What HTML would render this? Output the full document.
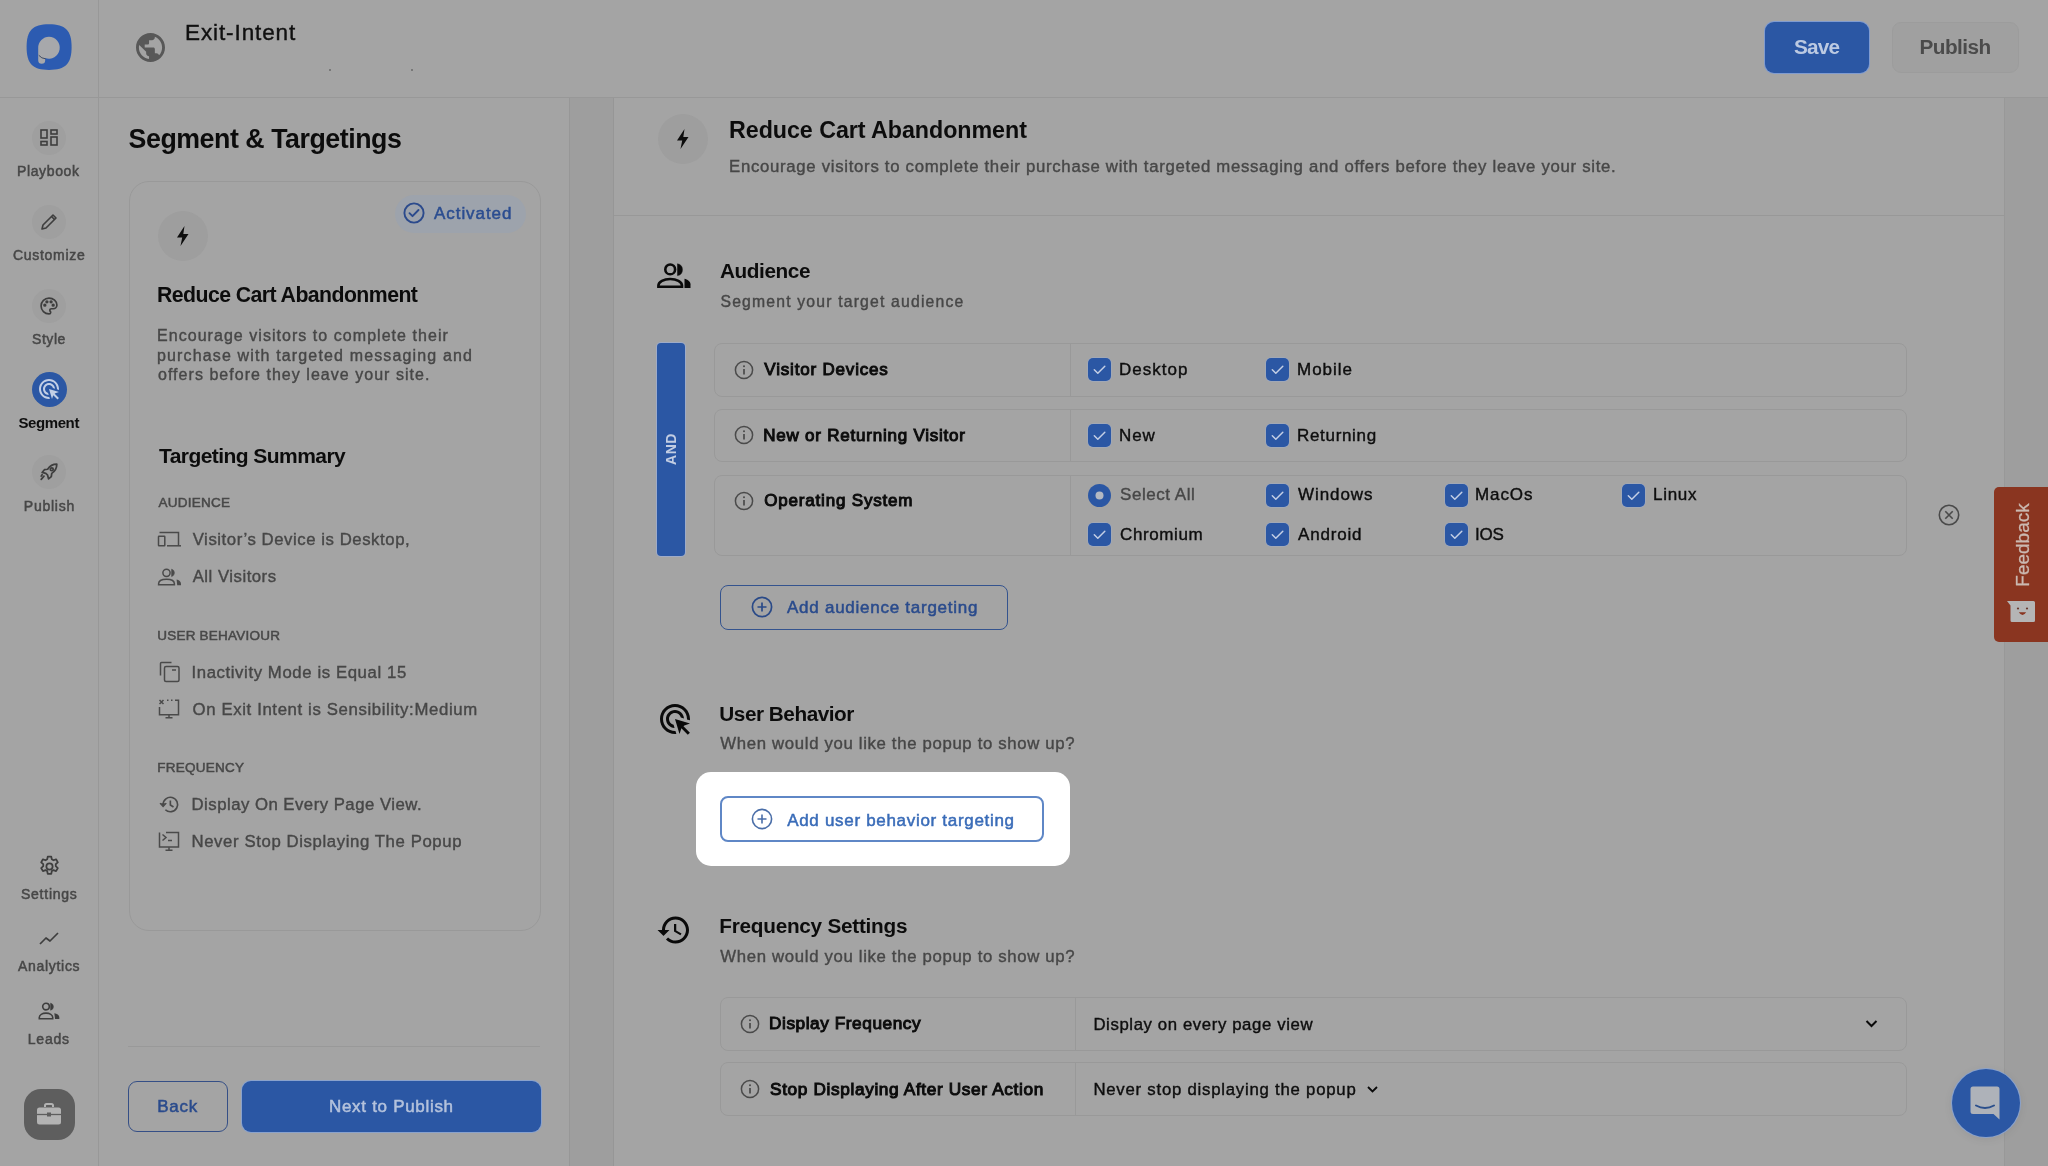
<!DOCTYPE html>
<html><head><meta charset="utf-8"><style>
html,body{margin:0;padding:0;width:2048px;height:1166px;overflow:hidden;background:#a4a4a4;}
body{position:relative;font-family:"Liberation Sans",sans-serif;}
#root{position:absolute;left:0;top:0;width:2048px;height:1166px;will-change:transform;}
.t{position:absolute;white-space:pre;line-height:1;}
.a{position:absolute;box-sizing:border-box;}
svg{position:absolute;overflow:visible;}
</style></head><body><div id="root">
<!-- structure -->
<div class="a" style="left:0;top:97px;width:2048px;height:1px;background:#989898"></div>
<div class="a" style="left:98px;top:0;width:1px;height:1166px;background:#989898"></div>
<div class="a" style="left:569px;top:98px;width:1px;height:1068px;background:#979797"></div>
<div class="a" style="left:570px;top:98px;width:43px;height:1068px;background:#9e9e9e"></div>
<div class="a" style="left:613px;top:98px;width:1px;height:1068px;background:#969696"></div>
<div class="a" style="left:2004px;top:98px;width:1px;height:1068px;background:#989898"></div>
<div class="a" style="left:2005px;top:98px;width:43px;height:1068px;background:#9e9e9e"></div>
<div class="a" style="left:614px;top:215px;width:1390px;height:1px;background:#989898"></div>

<!-- logo -->
<svg style="left:20px;top:20px" width="60" height="60" viewBox="20 20 60 60">
<path d="M49 24.2C65.5 24.2 71.6 30.5 71.6 47.1C71.6 63.7 65.5 70 49 70C32.5 70 26.6 63.7 26.6 47.1C26.6 30.5 32.5 24.2 49 24.2Z" fill="#2c5bb1"/>
<path d="M49 36.7A11 11 0 1 1 45.2 58.1L45.2 60.3Q45.2 63.8 41.7 63.8Q38.2 63.8 38.2 60.3L38.2 47.7A11 11 0 0 1 49 36.7Z" fill="#a7a8ab"/>
<path d="M38.8 55.3Q41.5 58.6 45.6 58.8" stroke="#33405a" stroke-width="0.9" fill="none"/>
</svg>
<div class="a" style="left:329px;top:69px;width:2px;height:2px;background:#6a6a6a;border-radius:1px"></div>
<div class="a" style="left:411px;top:69px;width:2px;height:2px;background:#6a6a6a;border-radius:1px"></div>
<!-- globe -->
<svg style="left:136px;top:33px" width="29" height="29" viewBox="2 2 20 20">
<path fill="#585858" d="M12 2C6.48 2 2 6.48 2 12s4.48 10 10 10 10-4.48 10-10S17.52 2 12 2zm-1 17.93c-3.95-.49-7-3.85-7-7.93 0-.62.08-1.21.21-1.79L9 15v1c0 1.1.9 2 2 2v1.93zm6.9-2.54c-.26-.81-1-1.39-1.9-1.39h-1v-3c0-.55-.45-1-1-1H8v-2h2c.55 0 1-.45 1-1V7h2c1.1 0 2-.9 2-2v-.41c2.93 1.19 5 4.06 5 7.41 0 2.08-.8 3.97-2.1 5.39z"/>
</svg>

<!-- header buttons -->
<div class="a" style="left:1765px;top:22px;width:104px;height:51px;background:#2b57a4;border-radius:9px;box-shadow:0 0 0 1px #7f9bd0"></div>
<div class="a" style="left:1892px;top:22px;width:127px;height:51px;background:#a0a0a0;border-radius:9px;border:1px solid #9c9c9c"></div>

<!-- sidebar icon circles -->
<div class="a" style="left:32px;top:121px;width:34px;height:34px;border-radius:50%;background:#9f9f9f"></div>
<div class="a" style="left:32px;top:205px;width:34px;height:34px;border-radius:50%;background:#9f9f9f"></div>
<div class="a" style="left:32px;top:289px;width:34px;height:34px;border-radius:50%;background:#9f9f9f"></div>
<div class="a" style="left:31.5px;top:372px;width:35px;height:35px;border-radius:50%;background:#2b57a4"></div>
<div class="a" style="left:32px;top:455px;width:34px;height:34px;border-radius:50%;background:#9f9f9f"></div>
<!-- playbook grid -->
<svg style="left:40px;top:129px" width="18" height="17" viewBox="0 0 18 17" fill="none" stroke="#3e3e3e" stroke-width="1.6">
<rect x="1" y="1" width="6" height="8"/><rect x="11" y="1" width="6" height="4"/><rect x="1" y="12.5" width="6" height="3.5"/><rect x="11" y="8" width="6" height="8"/>
</svg>
<!-- pencil -->
<svg style="left:39px;top:212px" width="20" height="20" viewBox="0 0 20 20" fill="none" stroke="#3e3e3e" stroke-width="1.6" stroke-linejoin="round">
<path d="M3 17l1-4L14 3l3 3L7 16z"/><path d="M12.5 4.5l3 3"/>
</svg>
<!-- palette -->
<svg style="left:39px;top:296px" width="20" height="20" viewBox="0 0 24 24" fill="none" stroke="#3e3e3e" stroke-width="2">
<path d="M12 2.5a9.5 9.5 0 0 0 0 19c1.2 0 2-.8 2-1.8 0-.5-.2-.9-.5-1.3-.3-.3-.5-.8-.5-1.3 0-1 .8-1.8 1.8-1.8H17a4.5 4.5 0 0 0 4.5-4.5C21.5 6.3 17.2 2.5 12 2.5z"/>
<circle cx="7" cy="11" r="1" fill="#3e3e3e"/><circle cx="9.5" cy="7" r="1" fill="#3e3e3e"/><circle cx="14.5" cy="7" r="1" fill="#3e3e3e"/><circle cx="17" cy="11" r="1" fill="#3e3e3e"/>
</svg>
<!-- segment ads_click white -->
<svg style="left:37px;top:377px" width="24" height="24" viewBox="0 0 24 24">
<path fill="#c3cfe6" d="M11.71 17.99C8.53 17.84 6 15.22 6 12c0-3.310 2.69-6 6-6 3.22 0 5.84 2.53 5.99 5.71l-2.1-.63C15.480 9.31 13.89 8 12 8c-2.21 0-4 1.79-4 4 0 1.89 1.31 3.48 3.08 3.89l.63 2.1zM22 12c0 .3-.01.6-.04.9l-1.97-.59c.01-.1.01-.21.01-.31 0-4.42-3.58-8-8-8s-8 3.58-8 8 3.58 8 8 8c.1 0 .21 0 .31-.01l.59 1.97c-.3.03-.6.04-.9.04-5.52 0-10-4.48-10-10S6.48 2 12 2s10 4.480 10 10zm-3.77 4.26L22 15l-10-3 3 10 1.26-3.77 4.27 4.27 1.41-1.41-4.270-4.27z"/>
</svg>
<!-- rocket -->
<svg style="left:38px;top:461px" width="22" height="22" viewBox="0 0 24 24" fill="none" stroke="#3e3e3e" stroke-width="1.9" stroke-linejoin="round" stroke-linecap="round">
<path d="M20.5 3.5c-4 0-7.5 1.8-10 5.5l-3.5.5-2.5 3 4 1 2 2 1 4 3-2.5.5-3.5c3.7-2.5 5.5-6 5.5-10z"/><circle cx="15" cy="9" r="1.6"/><path d="M6.5 16.5l-3 3.5M4.5 15l-1 1.5"/>
</svg>
<!-- gear -->
<svg style="left:36.5px;top:853.5px" width="25" height="25" viewBox="0 0 24 24" fill="none" stroke="#3e3e3e" stroke-width="1.7">
<path d="M10.3 2.5h3.4l.5 2.6 1.6.9 2.5-.9 1.7 2.9-2 1.8v1.9l2 1.8-1.7 2.9-2.5-.9-1.6.9-.5 2.6h-3.4l-.5-2.6-1.6-.9-2.5.9-1.7-2.9 2-1.8v-1.9l-2-1.8 1.7-2.9 2.5.9 1.6-.9z" stroke-linejoin="round"/><circle cx="12" cy="12" r="3"/>
</svg>
<!-- trend -->
<svg style="left:39px;top:931px" width="20" height="14" viewBox="0 0 20 14" fill="none" stroke="#3e3e3e" stroke-width="1.7" stroke-linejoin="round">
<path d="M1 13l6-6 4 3 8-8"/>
</svg>
<!-- leads users -->
<svg style="left:38px;top:1002px" width="22" height="18" viewBox="0 0 22 18" fill="none" stroke="#3e3e3e" stroke-width="1.6">
<circle cx="8" cy="4.6" r="3.3"/><path d="M12.6 1.2a3.6 3.6 0 0 1 0 7z" fill="#3e3e3e" stroke-width="0.6"/><path d="M1.3 16.7v-1.2c0-2.6 3-4.4 6.7-4.4s6.7 1.8 6.7 4.4v1.2z"/><path d="M16.3 11.2c2.6.4 5 1.6 5 4v1.8h-4.2z" fill="#3e3e3e" stroke="none"/>
</svg>
<!-- briefcase squircle -->
<div class="a" style="left:24px;top:1089px;width:51px;height:51px;border-radius:17px;background:#5e5e5e"></div>
<svg style="left:36px;top:1103px" width="26" height="23" viewBox="0 0 26 23">
<path d="M9 4V2.5Q9 1 10.5 1h5Q17 1 17 2.5V4" stroke="#b3b3b3" stroke-width="2" fill="none"/>
<rect x="1" y="4.5" width="24" height="17" rx="2.5" fill="#b3b3b3"/>
<path d="M1 11.5h24" stroke="#5e5e5e" stroke-width="1.3"/><rect x="11" y="9.5" width="4" height="4" fill="#5e5e5e"/>
</svg>

<!-- left card -->
<div class="a" style="left:128.5px;top:181px;width:412px;height:749.5px;border:1px solid #999;border-radius:20px"></div>
<div class="a" style="left:395px;top:195px;width:131px;height:38px;border-radius:19px;background:#9da3ac"></div>
<svg style="left:402.5px;top:202px" width="22" height="22" viewBox="0 0 22 22" fill="none" stroke="#2b4a8c" stroke-width="1.9">
<circle cx="11" cy="11" r="9.6"/><path d="M6.5 11.2l3 3 6-6.2" stroke-linecap="round" stroke-linejoin="round"/>
</svg>
<div class="a" style="left:158px;top:211px;width:50px;height:50px;border-radius:50%;background:#9e9e9e"></div>
<svg style="left:174px;top:225px" width="18" height="22" viewBox="0 0 18 22"><path d="M10.5 1L3 12.5h5.2L6.5 21 14.5 9H9.3z" fill="#0d0d0d"/></svg>

<!-- summary icons -->
<svg style="left:157px;top:531px" width="26" height="17" viewBox="0 0 26 17" fill="none" stroke="#4a4a4a" stroke-width="1.5">
<path d="M2.5 1.5h19v13.5"/><path d="M10 14.8h14"/><rect x="1.5" y="5.3" width="6.3" height="9.5" rx="0.5"/>
</svg>
<svg style="left:157px;top:568px" width="26" height="18" viewBox="0 0 26 18" fill="none" stroke="#4a4a4a" stroke-width="1.5">
<circle cx="9.5" cy="4.8" r="3.6"/><path d="M14.6 1.2a3.8 3.8 0 0 1 0 7.3z" fill="#4a4a4a" stroke-width="0.6"/><path d="M1.6 16.8v-1c0-3 3.5-4.6 7.9-4.6s7.9 1.6 7.9 4.6v1z"/><path d="M19.6 11.4c2.4.5 4.4 1.8 4.4 4.4v1.5h-3.8z" fill="#4a4a4a" stroke="none"/>
</svg>
<svg style="left:158px;top:660px" width="23" height="23" viewBox="0 0 23 23" fill="none" stroke="#4a4a4a" stroke-width="1.5">
<path d="M2.5 15.5V3.5q0-1 1-1h10"/><rect x="6.5" y="6.5" width="14.5" height="15" rx="1.5"/><path d="M14 10h4"/>
</svg>
<svg style="left:158px;top:698px" width="23" height="22" viewBox="0 0 23 22" fill="none" stroke="#4a4a4a" stroke-width="1.5">
<path d="M1.5 2l4 4M5.5 2l-4 4"/><path d="M9 2.3h1.5M13 2.3h1.5M17 2.3h3.5v14.5h-19V9"/><path d="M11 17v2.5M7.5 19.7h7"/>
</svg>
<svg style="left:158px;top:795px" width="22" height="19" viewBox="0 0 24 21" fill="none" stroke="#4a4a4a" stroke-width="1.8">
<path d="M5.5 10.5A8 8 0 1 1 8 16.3"/><path d="M2 9l3.5 3.8L9 9" fill="#4a4a4a" stroke-width="1.3"/><path d="M13.5 6v5l3.5 2.3"/>
</svg>
<svg style="left:158px;top:831px" width="23" height="21" viewBox="0 0 23 21" fill="none" stroke="#4a4a4a" stroke-width="1.5">
<path d="M8 1.5h12.5v14.5h-19V1.5"/><path d="M4.5 3.5l3.5 3-3.5 3M10 9.5h4"/><path d="M11 16.3v2.5M7.5 19.3h7"/>
</svg>

<div class="a" style="left:128px;top:1045.5px;width:412px;height:1px;background:#999"></div>
<div class="a" style="left:128px;top:1080.5px;width:99.5px;height:51.5px;border:1.6px solid #354f86;border-radius:9px"></div>
<div class="a" style="left:241.5px;top:1080.5px;width:299px;height:51.5px;background:#2b57a4;border-radius:9px;box-shadow:0 0 0 1px #8aa2cc"></div>
<!-- main top -->
<div class="a" style="left:658px;top:114px;width:50px;height:50px;border-radius:50%;background:#9e9e9e"></div>
<svg style="left:674px;top:128px" width="18" height="22" viewBox="0 0 18 22"><path d="M10.5 1L3 12.5h5.2L6.5 21 14.5 9H9.3z" fill="#0d0d0d"/></svg>

<!-- audience icon -->
<svg style="left:656px;top:262px" width="36" height="28" viewBox="0 0 36 28" fill="none" stroke="#0a0a0a" stroke-width="2.6">
<circle cx="14.2" cy="7.4" r="4.9"/>
<path d="M21.5 1.8a6 6 0 0 1 0 11.8z" fill="#0a0a0a" stroke-width="0.5"/>
<path d="M2.4 24.8v-1.2c0-4 5.5-6.6 11.8-6.6s11.8 2.6 11.8 6.6v1.2z"/>
<path d="M28.5 16.8c2.8.7 6 2.5 6 5.5v3.7h-6z" fill="#0a0a0a" stroke="none"/>
</svg>

<!-- AND bar -->
<div class="a" style="left:657px;top:343px;width:28px;height:213px;background:#2b57a4;border-radius:4px;box-shadow:0 0 0 1px #9eabc8"></div>
<div class="t" style="left:671px;top:449px;font-size:14px;font-weight:700;color:#c2cde3;transform:translate(-50%,-50%) rotate(-90deg);letter-spacing:0.6px">AND</div>

<!-- rows -->
<div class="a" style="left:714px;top:343px;width:1192.5px;height:53.5px;border:1px solid #999;border-radius:8px"></div>
<div class="a" style="left:714px;top:408.5px;width:1192.5px;height:53px;border:1px solid #999;border-radius:8px"></div>
<div class="a" style="left:714px;top:474.5px;width:1192.5px;height:81.5px;border:1px solid #999;border-radius:8px"></div>
<div class="a" style="left:1070px;top:344px;width:1px;height:52px;background:#999"></div>
<div class="a" style="left:1070px;top:409.5px;width:1px;height:51.5px;background:#999"></div>
<div class="a" style="left:1070px;top:475.5px;width:1px;height:80px;background:#999"></div>

<svg style="left:734px;top:359.5px" width="20" height="20" viewBox="0 0 20 20" fill="none" stroke="#4a4a4a" stroke-width="1.5"><circle cx="10" cy="10" r="8.6"/><path d="M10 9v5.5" stroke-width="1.7"/><circle cx="10" cy="6.3" r="1" fill="#4a4a4a" stroke="none"/></svg>
<svg style="left:734px;top:425px" width="20" height="20" viewBox="0 0 20 20" fill="none" stroke="#4a4a4a" stroke-width="1.5"><circle cx="10" cy="10" r="8.6"/><path d="M10 9v5.5" stroke-width="1.7"/><circle cx="10" cy="6.3" r="1" fill="#4a4a4a" stroke="none"/></svg>
<svg style="left:734px;top:490.5px" width="20" height="20" viewBox="0 0 20 20" fill="none" stroke="#4a4a4a" stroke-width="1.5"><circle cx="10" cy="10" r="8.6"/><path d="M10 9v5.5" stroke-width="1.7"/><circle cx="10" cy="6.3" r="1" fill="#4a4a4a" stroke="none"/></svg>

<!-- checkboxes -->
<svg style="left:1088px;top:358px" width="23" height="23" viewBox="0 0 23 23"><rect x="-0.5" y="-0.5" width="24" height="24" rx="5.5" fill="#9eabc8"/><rect width="23" height="23" rx="5" fill="#2b57a4"/><path d="M6.3 11.8l3.5 3.5 7-7" fill="none" stroke="#c4cfe5" stroke-width="1.5" stroke-linecap="round" stroke-linejoin="round"/></svg>
<svg style="left:1266px;top:358px" width="23" height="23" viewBox="0 0 23 23"><rect x="-0.5" y="-0.5" width="24" height="24" rx="5.5" fill="#9eabc8"/><rect width="23" height="23" rx="5" fill="#2b57a4"/><path d="M6.3 11.8l3.5 3.5 7-7" fill="none" stroke="#c4cfe5" stroke-width="1.5" stroke-linecap="round" stroke-linejoin="round"/></svg>
<svg style="left:1088px;top:424px" width="23" height="23" viewBox="0 0 23 23"><rect x="-0.5" y="-0.5" width="24" height="24" rx="5.5" fill="#9eabc8"/><rect width="23" height="23" rx="5" fill="#2b57a4"/><path d="M6.3 11.8l3.5 3.5 7-7" fill="none" stroke="#c4cfe5" stroke-width="1.5" stroke-linecap="round" stroke-linejoin="round"/></svg>
<svg style="left:1266px;top:424px" width="23" height="23" viewBox="0 0 23 23"><rect x="-0.5" y="-0.5" width="24" height="24" rx="5.5" fill="#9eabc8"/><rect width="23" height="23" rx="5" fill="#2b57a4"/><path d="M6.3 11.8l3.5 3.5 7-7" fill="none" stroke="#c4cfe5" stroke-width="1.5" stroke-linecap="round" stroke-linejoin="round"/></svg>
<svg style="left:1088px;top:483.5px" width="23" height="23" viewBox="0 0 23 23"><circle cx="11.5" cy="11.5" r="11.5" fill="#2b57a4"/><circle cx="11.5" cy="11.5" r="4" fill="#b4b9c2"/></svg>
<svg style="left:1266px;top:483.5px" width="23" height="23" viewBox="0 0 23 23"><rect x="-0.5" y="-0.5" width="24" height="24" rx="5.5" fill="#9eabc8"/><rect width="23" height="23" rx="5" fill="#2b57a4"/><path d="M6.3 11.8l3.5 3.5 7-7" fill="none" stroke="#c4cfe5" stroke-width="1.5" stroke-linecap="round" stroke-linejoin="round"/></svg>
<svg style="left:1444.5px;top:483.5px" width="23" height="23" viewBox="0 0 23 23"><rect x="-0.5" y="-0.5" width="24" height="24" rx="5.5" fill="#9eabc8"/><rect width="23" height="23" rx="5" fill="#2b57a4"/><path d="M6.3 11.8l3.5 3.5 7-7" fill="none" stroke="#c4cfe5" stroke-width="1.5" stroke-linecap="round" stroke-linejoin="round"/></svg>
<svg style="left:1622px;top:483.5px" width="23" height="23" viewBox="0 0 23 23"><rect x="-0.5" y="-0.5" width="24" height="24" rx="5.5" fill="#9eabc8"/><rect width="23" height="23" rx="5" fill="#2b57a4"/><path d="M6.3 11.8l3.5 3.5 7-7" fill="none" stroke="#c4cfe5" stroke-width="1.5" stroke-linecap="round" stroke-linejoin="round"/></svg>
<svg style="left:1088px;top:523px" width="23" height="23" viewBox="0 0 23 23"><rect x="-0.5" y="-0.5" width="24" height="24" rx="5.5" fill="#9eabc8"/><rect width="23" height="23" rx="5" fill="#2b57a4"/><path d="M6.3 11.8l3.5 3.5 7-7" fill="none" stroke="#c4cfe5" stroke-width="1.5" stroke-linecap="round" stroke-linejoin="round"/></svg>
<svg style="left:1266px;top:523px" width="23" height="23" viewBox="0 0 23 23"><rect x="-0.5" y="-0.5" width="24" height="24" rx="5.5" fill="#9eabc8"/><rect width="23" height="23" rx="5" fill="#2b57a4"/><path d="M6.3 11.8l3.5 3.5 7-7" fill="none" stroke="#c4cfe5" stroke-width="1.5" stroke-linecap="round" stroke-linejoin="round"/></svg>
<svg style="left:1444.5px;top:523px" width="23" height="23" viewBox="0 0 23 23"><rect x="-0.5" y="-0.5" width="24" height="24" rx="5.5" fill="#9eabc8"/><rect width="23" height="23" rx="5" fill="#2b57a4"/><path d="M6.3 11.8l3.5 3.5 7-7" fill="none" stroke="#c4cfe5" stroke-width="1.5" stroke-linecap="round" stroke-linejoin="round"/></svg>

<!-- close circle -->
<svg style="left:1937.5px;top:503.5px" width="22" height="22" viewBox="0 0 22 22" fill="none" stroke="#4a4a4a" stroke-width="1.6"><circle cx="11" cy="11" r="9.7"/><path d="M7.3 7.3l7.4 7.4M14.7 7.3l-7.4 7.4"/></svg>

<!-- add audience button -->
<div class="a" style="left:719.5px;top:584.5px;width:288px;height:45.5px;border:1.8px solid #34538e;border-radius:8px"></div>
<svg style="left:751px;top:596px" width="22" height="22" viewBox="0 0 22 22" fill="none" stroke="#2a4a88" stroke-width="1.7"><circle cx="11" cy="11" r="9.6"/><path d="M11 6.5v9M6.5 11h9"/></svg>

<!-- user behaviour icon -->
<svg style="left:659.5px;top:703.5px" width="30" height="30" viewBox="2 2 20 20"><path fill="#0a0a0a" d="M11.71 17.99C8.53 17.84 6 15.22 6 12c0-3.31 2.69-6 6-6 3.22 0 5.84 2.53 5.99 5.71l-2.1-.63C15.48 9.31 13.89 8 12 8c-2.21 0-4 1.79-4 4 0 1.89 1.31 3.48 3.08 3.890l.63 2.1zM22 12c0 .3-.01.6-.04.9l-1.97-.59c.01-.1.01-.21.01-.31 0-4.42-3.58-8-8-8s-8 3.58-8 8 3.58 8 8 8c.1 0 .21 0 .31-.01l.59 1.97c-.3.03-.6.04-.9.04-5.52 0-10-4.48-10-10S6.48 2 12 2s10 4.48 10 10zm-3.77 4.26L22 15l-10-3 3 10 1.26-3.77 4.27 4.27 1.41-1.41-4.27-4.27z"/></svg>

<!-- frequency icon -->
<svg style="left:656px;top:912px" width="36" height="36" viewBox="0 0 24 24"><path fill="#0a0a0a" d="M13 3c-4.97 0-9 4.03-9 9H1l3.89 3.89.07.14L9 12H6c0-3.87 3.130-7 7-7s7 3.13 7 7-3.13 7-7 7c-1.93 0-3.68-.79-4.94-2.06l-1.42 1.42C8.27 19.99 10.51 21 13 21c4.97 0 9-4.03 9-9s-4.03-9-9-9zm-1 5v5l4.28 2.54.72-1.21-3.5-2.08V8H12z"/></svg>

<!-- frequency rows -->
<div class="a" style="left:720px;top:997px;width:1187px;height:53.5px;border:1px solid #999;border-radius:8px"></div>
<div class="a" style="left:720px;top:1061.5px;width:1187px;height:54px;border:1px solid #999;border-radius:8px"></div>
<div class="a" style="left:1075px;top:998px;width:1px;height:51.5px;background:#999"></div>
<div class="a" style="left:1075px;top:1062.5px;width:1px;height:52px;background:#999"></div>
<svg style="left:739.5px;top:1014px" width="20" height="20" viewBox="0 0 20 20" fill="none" stroke="#4a4a4a" stroke-width="1.5"><circle cx="10" cy="10" r="8.6"/><path d="M10 9v5.5" stroke-width="1.7"/><circle cx="10" cy="6.3" r="1" fill="#4a4a4a" stroke="none"/></svg>
<svg style="left:739.5px;top:1079px" width="20" height="20" viewBox="0 0 20 20" fill="none" stroke="#4a4a4a" stroke-width="1.5"><circle cx="10" cy="10" r="8.6"/><path d="M10 9v5.5" stroke-width="1.7"/><circle cx="10" cy="6.3" r="1" fill="#4a4a4a" stroke="none"/></svg>
<svg style="left:1865px;top:1019px" width="13" height="10" viewBox="0 0 13 10" fill="none" stroke="#0a0a0a" stroke-width="2"><path d="M1.5 2l5 5 5-5"/></svg>
<svg style="left:1366px;top:1085px" width="13" height="9" viewBox="0 0 13 9" fill="none" stroke="#0a0a0a" stroke-width="1.8"><path d="M2 2l4.5 4.5L11 2"/></svg>

<!-- chat bubble -->
<div class="a" style="left:1951.5px;top:1068.5px;width:68px;height:68px;border-radius:50%;background:#2b57a4;box-shadow:0 0 0 1px #8aa2cc,0 2px 10px rgba(0,0,0,0.08)"></div>
<svg style="left:1969px;top:1085px" width="32" height="36" viewBox="0 0 32 36">
<path d="M4 1.5h24q2.5 0 2.5 2.5v30.5l-6-5.5H4q-2.5 0-2.5-2.5V4Q1.5 1.5 4 1.5z" fill="#aeb2b9"/>
<path d="M7 20.5q9 5 18 0" stroke="#2b4f8c" stroke-width="2" fill="none" stroke-linecap="round"/>
</svg>

<!-- feedback tab -->
<div class="a" style="left:1994px;top:487px;width:54px;height:155px;background:#8a3520;border-radius:5px 0 0 5px"></div>
<div class="t" style="left:2022px;top:544.5px;font-size:19px;color:#cbb9b1;-webkit-text-stroke:0.3px #cbb9b1;transform:translate(-50%,-50%) rotate(-90deg)">Feedback</div>
<svg style="left:2006px;top:600px" width="30" height="23" viewBox="0 0 30 23">
<path d="M1 1h26.5q1.5 0 1.5 1.5v18q0 1.5-1.5 1.5H6q-1.5 0-1.5-1.5V5.5z" fill="#b5b5b5"/>
<circle cx="12" cy="8.5" r="1.1" fill="#6b3a2e"/><circle cx="21" cy="8.5" r="1.1" fill="#6b3a2e"/><path d="M12.8 12.2q3.7 5.5 7.4 0z" fill="#8a3520"/>
</svg>

<div class="t" style="left:185.00px;top:21.55px;font-size:22.5px;font-weight:400;letter-spacing:0.896px;color:#101010;-webkit-text-stroke:0.40px #101010;">Exit-Intent</div>
<div class="t" style="left:1794.00px;top:37.14px;font-size:20.75px;font-weight:700;letter-spacing:-0.773px;color:#bccae2;">Save</div>
<div class="t" style="left:1919.50px;top:37.14px;font-size:20.75px;font-weight:700;letter-spacing:-0.543px;color:#4b4b4b;">Publish</div>
<div class="t" style="left:17.00px;top:163.95px;font-size:14.0px;font-weight:400;letter-spacing:0.630px;color:#474747;-webkit-text-stroke:0.50px #474747;">Playbook</div>
<div class="t" style="left:13.00px;top:248.15px;font-size:14.0px;font-weight:400;letter-spacing:0.707px;color:#474747;-webkit-text-stroke:0.50px #474747;">Customize</div>
<div class="t" style="left:32.00px;top:331.75px;font-size:14.0px;font-weight:400;letter-spacing:0.566px;color:#474747;-webkit-text-stroke:0.50px #474747;">Style</div>
<div class="t" style="left:18.40px;top:414.90px;font-size:15.0px;font-weight:700;letter-spacing:-0.392px;color:#0e0e0e;">Segment</div>
<div class="t" style="left:23.80px;top:498.85px;font-size:14.0px;font-weight:400;letter-spacing:0.762px;color:#474747;-webkit-text-stroke:0.50px #474747;">Publish</div>
<div class="t" style="left:21.00px;top:886.85px;font-size:14.0px;font-weight:400;letter-spacing:0.745px;color:#474747;-webkit-text-stroke:0.50px #474747;">Settings</div>
<div class="t" style="left:18.00px;top:959.45px;font-size:14.0px;font-weight:400;letter-spacing:0.697px;color:#474747;-webkit-text-stroke:0.50px #474747;">Analytics</div>
<div class="t" style="left:27.80px;top:1032.15px;font-size:14.0px;font-weight:400;letter-spacing:0.764px;color:#474747;-webkit-text-stroke:0.50px #474747;">Leads</div>
<div class="t" style="left:128.60px;top:125.76px;font-size:26.75px;font-weight:700;letter-spacing:-0.454px;color:#0c0c0c;">Segment &amp; Targetings</div>
<div class="t" style="left:434.00px;top:205.41px;font-size:17.0px;font-weight:400;letter-spacing:0.941px;color:#2b4d90;-webkit-text-stroke:0.50px #2b4d90;">Activated</div>
<div class="t" style="left:157.00px;top:285.21px;font-size:21.25px;font-weight:700;letter-spacing:-0.556px;color:#0c0c0c;">Reduce Cart Abandonment</div>
<div class="t" style="left:157.00px;top:328.46px;font-size:16.0px;font-weight:400;letter-spacing:1.042px;color:#474747;-webkit-text-stroke:0.40px #474747;">Encourage visitors to complete their</div>
<div class="t" style="left:157.00px;top:347.86px;font-size:16.0px;font-weight:400;letter-spacing:1.145px;color:#474747;-webkit-text-stroke:0.40px #474747;">purchase with targeted messaging and</div>
<div class="t" style="left:158.00px;top:367.26px;font-size:16.0px;font-weight:400;letter-spacing:1.034px;color:#474747;-webkit-text-stroke:0.40px #474747;">offers before they leave your site.</div>
<div class="t" style="left:159.00px;top:445.12px;font-size:21.0px;font-weight:700;letter-spacing:-0.561px;color:#0c0c0c;">Targeting Summary</div>
<div class="t" style="left:158.50px;top:496.27px;font-size:13.5px;font-weight:400;letter-spacing:0.249px;color:#484848;-webkit-text-stroke:0.50px #484848;">AUDIENCE</div>
<div class="t" style="left:192.70px;top:532.02px;font-size:16.75px;font-weight:400;letter-spacing:0.554px;color:#474747;-webkit-text-stroke:0.40px #474747;">Visitor’s Device is Desktop,</div>
<div class="t" style="left:192.70px;top:569.02px;font-size:16.75px;font-weight:400;letter-spacing:0.500px;color:#474747;-webkit-text-stroke:0.40px #474747;">All Visitors</div>
<div class="t" style="left:157.20px;top:628.57px;font-size:13.5px;font-weight:400;letter-spacing:0.229px;color:#484848;-webkit-text-stroke:0.50px #484848;">USER BEHAVIOUR</div>
<div class="t" style="left:191.50px;top:664.52px;font-size:16.75px;font-weight:400;letter-spacing:0.595px;color:#474747;-webkit-text-stroke:0.40px #474747;">Inactivity Mode is Equal 15</div>
<div class="t" style="left:192.50px;top:701.62px;font-size:16.75px;font-weight:400;letter-spacing:0.632px;color:#474747;-webkit-text-stroke:0.40px #474747;">On Exit Intent is Sensibility:Medium</div>
<div class="t" style="left:157.20px;top:760.87px;font-size:13.5px;font-weight:400;letter-spacing:0.256px;color:#484848;-webkit-text-stroke:0.50px #484848;">FREQUENCY</div>
<div class="t" style="left:191.50px;top:796.82px;font-size:16.75px;font-weight:400;letter-spacing:0.481px;color:#474747;-webkit-text-stroke:0.40px #474747;">Display On Every Page View.</div>
<div class="t" style="left:191.50px;top:834.02px;font-size:16.75px;font-weight:400;letter-spacing:0.600px;color:#474747;-webkit-text-stroke:0.40px #474747;">Never Stop Displaying The Popup</div>
<div class="t" style="left:157.20px;top:1097.51px;font-size:17.0px;font-weight:400;letter-spacing:0.769px;color:#2a4b8c;-webkit-text-stroke:0.50px #2a4b8c;">Back</div>
<div class="t" style="left:329.00px;top:1097.51px;font-size:17.0px;font-weight:400;letter-spacing:0.694px;color:#b4c2dc;-webkit-text-stroke:0.50px #b4c2dc;">Next to Publish</div>
<div class="t" style="left:729.00px;top:118.82px;font-size:23.25px;font-weight:700;letter-spacing:-0.043px;color:#0c0c0c;">Reduce Cart Abandonment</div>
<div class="t" style="left:729.00px;top:158.52px;font-size:16.75px;font-weight:400;letter-spacing:0.704px;color:#474747;-webkit-text-stroke:0.40px #474747;">Encourage visitors to complete their purchase with targeted messaging and offers before they leave your site.</div>
<div class="t" style="left:720.00px;top:261.14px;font-size:20.75px;font-weight:700;letter-spacing:-0.408px;color:#0c0c0c;">Audience</div>
<div class="t" style="left:720.50px;top:293.67px;font-size:15.75px;font-weight:400;letter-spacing:1.176px;color:#474747;-webkit-text-stroke:0.40px #474747;">Segment your target audience</div>
<div class="t" style="left:764.30px;top:361.21px;font-size:17.0px;font-weight:400;letter-spacing:0.814px;color:#0c0c0c;-webkit-text-stroke:1.00px #0c0c0c;">Visitor Devices</div>
<div class="t" style="left:763.30px;top:426.61px;font-size:17.0px;font-weight:400;letter-spacing:0.771px;color:#0c0c0c;-webkit-text-stroke:1.00px #0c0c0c;">New or Returning Visitor</div>
<div class="t" style="left:764.30px;top:492.01px;font-size:17.0px;font-weight:400;letter-spacing:0.807px;color:#0c0c0c;-webkit-text-stroke:1.00px #0c0c0c;">Operating System</div>
<div class="t" style="left:1119.00px;top:361.11px;font-size:17.0px;font-weight:400;letter-spacing:1.015px;color:#0e0e0e;-webkit-text-stroke:0.40px #0e0e0e;">Desktop</div>
<div class="t" style="left:1297.00px;top:361.11px;font-size:17.0px;font-weight:400;letter-spacing:0.975px;color:#0e0e0e;-webkit-text-stroke:0.40px #0e0e0e;">Mobile</div>
<div class="t" style="left:1119.00px;top:426.61px;font-size:17.0px;font-weight:400;letter-spacing:0.934px;color:#0e0e0e;-webkit-text-stroke:0.40px #0e0e0e;">New</div>
<div class="t" style="left:1297.00px;top:426.61px;font-size:17.0px;font-weight:400;letter-spacing:0.680px;color:#0e0e0e;-webkit-text-stroke:0.40px #0e0e0e;">Returning</div>
<div class="t" style="left:1298.00px;top:485.61px;font-size:17.0px;font-weight:400;letter-spacing:0.923px;color:#0e0e0e;-webkit-text-stroke:0.40px #0e0e0e;">Windows</div>
<div class="t" style="left:1475.00px;top:485.61px;font-size:17.0px;font-weight:400;letter-spacing:0.915px;color:#0e0e0e;-webkit-text-stroke:0.40px #0e0e0e;">MacOs</div>
<div class="t" style="left:1653.00px;top:485.61px;font-size:17.0px;font-weight:400;letter-spacing:0.715px;color:#0e0e0e;-webkit-text-stroke:0.40px #0e0e0e;">Linux</div>
<div class="t" style="left:1120.00px;top:525.61px;font-size:17.0px;font-weight:400;letter-spacing:0.623px;color:#0e0e0e;-webkit-text-stroke:0.40px #0e0e0e;">Chromium</div>
<div class="t" style="left:1298.00px;top:525.61px;font-size:17.0px;font-weight:400;letter-spacing:0.810px;color:#0e0e0e;-webkit-text-stroke:0.40px #0e0e0e;">Android</div>
<div class="t" style="left:1475.00px;top:525.61px;font-size:17.0px;font-weight:400;letter-spacing:-0.173px;color:#0e0e0e;-webkit-text-stroke:0.40px #0e0e0e;">IOS</div>
<div class="t" style="left:1120.00px;top:485.61px;font-size:17.0px;font-weight:400;letter-spacing:0.546px;color:#474747;-webkit-text-stroke:0.40px #474747;">Select All</div>
<div class="t" style="left:787.00px;top:599.31px;font-size:17.0px;font-weight:400;letter-spacing:0.743px;color:#2a4b8c;-webkit-text-stroke:0.50px #2a4b8c;">Add audience targeting</div>
<div class="t" style="left:719.30px;top:703.64px;font-size:20.75px;font-weight:700;letter-spacing:-0.469px;color:#0c0c0c;">User Behavior</div>
<div class="t" style="left:720.30px;top:736.32px;font-size:16.75px;font-weight:400;letter-spacing:0.664px;color:#474747;-webkit-text-stroke:0.40px #474747;">When would you like the popup to show up?</div>
<div class="t" style="left:719.30px;top:915.94px;font-size:20.75px;font-weight:700;letter-spacing:-0.260px;color:#0c0c0c;">Frequency Settings</div>
<div class="t" style="left:720.30px;top:948.62px;font-size:16.75px;font-weight:400;letter-spacing:0.664px;color:#474747;-webkit-text-stroke:0.40px #474747;">When would you like the popup to show up?</div>
<div class="t" style="left:769.00px;top:1015.40px;font-size:17.25px;font-weight:400;letter-spacing:0.548px;color:#0c0c0c;-webkit-text-stroke:1.00px #0c0c0c;">Display Frequency</div>
<div class="t" style="left:770.00px;top:1080.90px;font-size:17.25px;font-weight:400;letter-spacing:0.630px;color:#0c0c0c;-webkit-text-stroke:1.00px #0c0c0c;">Stop Displaying After User Action</div>
<div class="t" style="left:1093.40px;top:1016.82px;font-size:16.75px;font-weight:400;letter-spacing:0.608px;color:#0e0e0e;-webkit-text-stroke:0.40px #0e0e0e;">Display on every page view</div>
<div class="t" style="left:1093.40px;top:1081.82px;font-size:16.75px;font-weight:400;letter-spacing:0.767px;color:#0e0e0e;-webkit-text-stroke:0.40px #0e0e0e;">Never stop displaying the popup</div>
<div class="a" style="left:695.5px;top:771.5px;width:374px;height:94px;background:#fff;border-radius:15px;"></div>
<div class="a" style="left:719.5px;top:796px;width:324px;height:46px;border:2px solid #5f87c6;border-radius:8px;"></div>
<svg style="left:751px;top:808px" width="22" height="22" viewBox="0 0 22 22"><circle cx="11" cy="11" r="9.6" fill="none" stroke="#4a6ea8" stroke-width="1.6"/><path d="M11 6.5v9M6.5 11h9" stroke="#4a6ea8" stroke-width="1.6"/></svg>
<div class="t" style="left:787.20px;top:811.81px;font-size:17.0px;font-weight:400;letter-spacing:0.692px;color:#3a6cb8;-webkit-text-stroke:0.50px #3a6cb8;">Add user behavior targeting</div>
</div></body></html>
